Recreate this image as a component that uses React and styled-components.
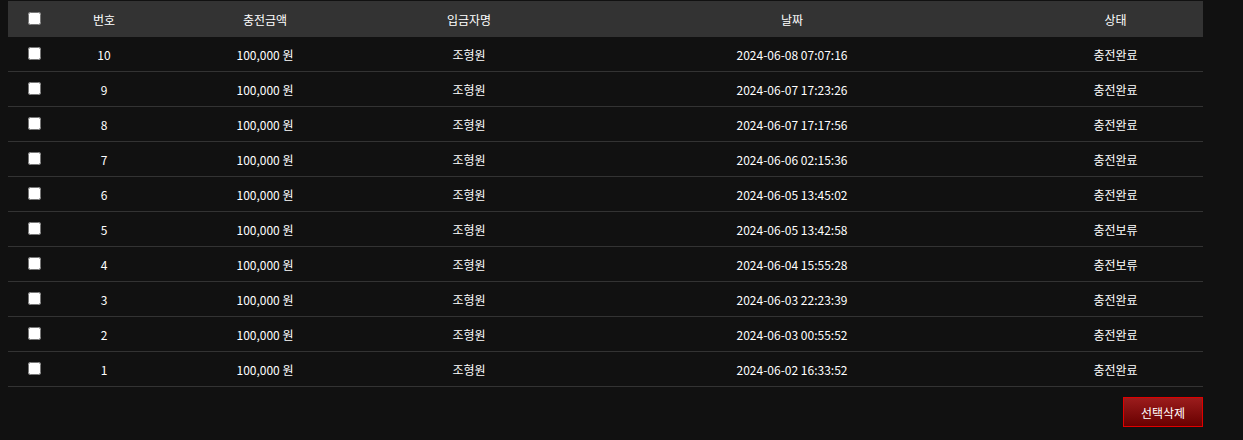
import React from "react";
import styled, { createGlobalStyle } from "styled-components";

const Global = createGlobalStyle`
  html, body { margin: 0; padding: 0; background: #111111; }
  body { font-family: "Malgun Gothic", "Noto Sans CJK KR", "Noto Sans", sans-serif; font-size: 12px; color: #ffffff; }
`;

const Page = styled.div`
  padding: 1px 0 0 8px;
  width: 1195px;
`;

const Table = styled.table`
  width: 1195px;
  border-collapse: collapse;
  table-layout: fixed;
`;

const HeadCell = styled.th`
  height: 36px;
  padding: 0;
  background: #333333;
  font-weight: normal;
  text-align: center;
  vertical-align: middle;
  color: #ffffff;
`;

const Row = styled.tr`
  border-bottom: 1px solid #333333;
`;

const Cell = styled.td`
  height: 34px;
  padding: 0;
  text-align: center;
  vertical-align: middle;
  color: #ffffff;
`;

const Check = styled.input.attrs({ type: "checkbox" })`
  display: block;
  width: 13px;
  height: 13px;
  margin: ${(p) => (p.$head ? "-2px auto 0" : "-1px auto 0")};
`;

const Footer = styled.div`
  display: flex;
  justify-content: flex-end;
  padding-top: 10px;
`;

const DeleteButton = styled.button`
  width: 80px;
  height: 30px;
  border: 1px solid #e00000;
  background: linear-gradient(#9b1c1c, #680000);
  color: #ffffff;
  font-family: inherit;
  font-size: 12px;
  padding: 0;
  cursor: pointer;
`;

const cols = [52, 88, 234, 174, 472, 175];

const rows = [
  ["10", "2024-06-08 07:07:16", "충전완료"],
  ["9", "2024-06-07 17:23:26", "충전완료"],
  ["8", "2024-06-07 17:17:56", "충전완료"],
  ["7", "2024-06-06 02:15:36", "충전완료"],
  ["6", "2024-06-05 13:45:02", "충전완료"],
  ["5", "2024-06-05 13:42:58", "충전보류"],
  ["4", "2024-06-04 15:55:28", "충전보류"],
  ["3", "2024-06-03 22:23:39", "충전완료"],
  ["2", "2024-06-03 00:55:52", "충전완료"],
  ["1", "2024-06-02 16:33:52", "충전완료"],
];

export default function App() {
  return (
    <Page>
      <Global />
      <Table>
        <colgroup>
          {cols.map((w, i) => (
            <col key={i} style={{ width: w }} />
          ))}
        </colgroup>
        <thead>
          <tr>
            <HeadCell><Check $head /></HeadCell>
            <HeadCell>번호</HeadCell>
            <HeadCell>충전금액</HeadCell>
            <HeadCell>입금자명</HeadCell>
            <HeadCell>날짜</HeadCell>
            <HeadCell>상태</HeadCell>
          </tr>
        </thead>
        <tbody>
          {rows.map(([n, d, s]) => (
            <Row key={n}>
              <Cell><Check /></Cell>
              <Cell>{n}</Cell>
              <Cell>100,000 원</Cell>
              <Cell>조형원</Cell>
              <Cell>{d}</Cell>
              <Cell>{s}</Cell>
            </Row>
          ))}
        </tbody>
      </Table>
      <Footer>
        <DeleteButton>선택삭제</DeleteButton>
      </Footer>
    </Page>
  );
}
